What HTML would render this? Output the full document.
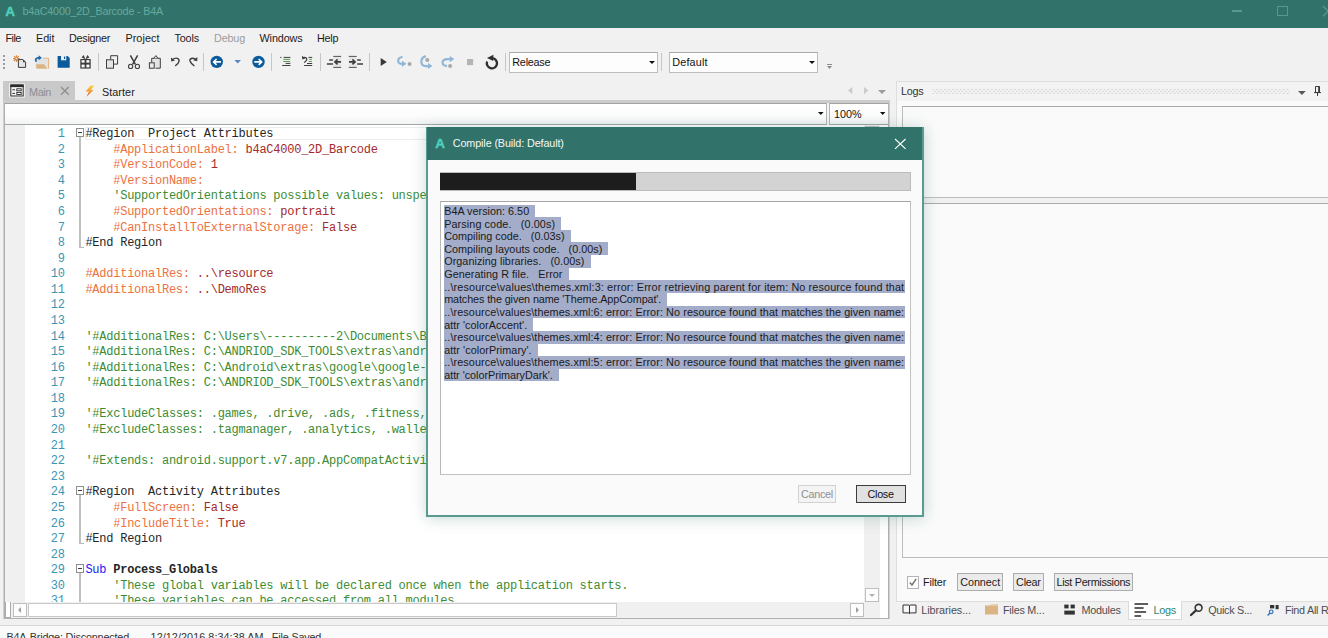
<!DOCTYPE html>
<html>
<head>
<meta charset="utf-8">
<title>b4aC4000_2D_Barcode - B4A</title>
<style>
*{box-sizing:border-box;margin:0;padding:0}
html,body{width:1328px;height:638px;overflow:hidden}
body{position:relative;background:#f1f1f1;font-family:"Liberation Sans",sans-serif;font-size:11px;color:#1b1b1b}
.abs{position:absolute}
.t{position:absolute;white-space:pre}
svg{overflow:visible}
.code{position:absolute;font-family:"Liberation Mono",monospace;font-size:12px;letter-spacing:-0.241px;line-height:16px;height:16px;white-space:pre}
.o{color:#ec7240}.r{color:#a52a2a}.g{color:#3c8c33}.k{color:#262626}.b{color:#2020f5}.n{color:#3a96b4}
.sel{background:#a3acc9}
</style>
</head>
<body>
<div class="abs" style="left:0px;top:0px;width:1328px;height:28px;background:#31736a;"></div>
<span class="t" style="left:5.30px;top:3.95px;font-size:13.5px;line-height:16.5px;height:16.5px;color:#4fd0bd;font-weight:700;-webkit-text-stroke:0.4px #4fd0bd;">A</span>
<span class="t" style="left:22.40px;top:4.85px;font-size:10.7px;line-height:13.7px;height:13.7px;color:#68a99e;letter-spacing:-0.152px;">b4aC4000_2D_Barcode - B4A</span>
<div class="abs" style="left:1232px;top:10.3px;width:10px;height:1.5px;background:#57998e;"></div>
<div class="abs" style="left:1277px;top:5.6px;width:10.5px;height:10px;border:1.3px solid #57998e;"></div>
<svg class="abs" style="left:1323px;top:5.5px" width="10.3" height="10.3" viewBox="0 0 10.3 10.3"><path d="M0 0L10.3 10.3M0 10.3L10.3 0" stroke="#57998e" stroke-width="1.3" fill="none"/></svg>
<span class="t" style="left:5.50px;top:32.10px;font-size:10.8px;line-height:13.8px;height:13.8px;color:#1b1b1b;letter-spacing:-0.527px;">File</span>
<span class="t" style="left:36.00px;top:32.10px;font-size:10.8px;line-height:13.8px;height:13.8px;color:#1b1b1b;letter-spacing:-0.052px;">Edit</span>
<span class="t" style="left:69.00px;top:32.10px;font-size:10.8px;line-height:13.8px;height:13.8px;color:#1b1b1b;letter-spacing:-0.252px;">Designer</span>
<span class="t" style="left:125.40px;top:32.10px;font-size:10.8px;line-height:13.8px;height:13.8px;color:#1b1b1b;letter-spacing:0.084px;">Project</span>
<span class="t" style="left:174.50px;top:32.10px;font-size:10.8px;line-height:13.8px;height:13.8px;color:#1b1b1b;letter-spacing:-0.144px;">Tools</span>
<span class="t" style="left:214.00px;top:32.10px;font-size:10.8px;line-height:13.8px;height:13.8px;color:#9d9d9d;letter-spacing:-0.166px;">Debug</span>
<span class="t" style="left:259.50px;top:32.10px;font-size:10.8px;line-height:13.8px;height:13.8px;color:#1b1b1b;letter-spacing:-0.102px;">Windows</span>
<span class="t" style="left:317.00px;top:32.10px;font-size:10.8px;line-height:13.8px;height:13.8px;color:#1b1b1b;letter-spacing:-0.255px;">Help</span>
<div class="abs" style="left:3px;top:55px;width:2px;height:2px;background:#9c9c9c;"></div>
<div class="abs" style="left:3px;top:59px;width:2px;height:2px;background:#9c9c9c;"></div>
<div class="abs" style="left:3px;top:63px;width:2px;height:2px;background:#9c9c9c;"></div>
<div class="abs" style="left:3px;top:67px;width:2px;height:2px;background:#9c9c9c;"></div>
<div class="abs" style="left:98.2px;top:53px;width:1px;height:18px;background:#c6c6c6;"></div>
<div class="abs" style="left:202.9px;top:53px;width:1px;height:18px;background:#c6c6c6;"></div>
<div class="abs" style="left:271.3px;top:53px;width:1px;height:18px;background:#c6c6c6;"></div>
<div class="abs" style="left:319.9px;top:53px;width:1px;height:18px;background:#c6c6c6;"></div>
<div class="abs" style="left:369.1px;top:53px;width:1px;height:18px;background:#c6c6c6;"></div>
<div class="abs" style="left:504.8px;top:53px;width:1px;height:18px;background:#c6c6c6;"></div>
<div class="abs" style="left:661.2px;top:53px;width:1px;height:18px;background:#c6c6c6;"></div>
<div class="abs" style="left:509.3px;top:51.5px;width:148.7px;height:21.2px;background:#fdfdfd;border:1px solid #bdbdbd;border-top-color:#a9a9a9;"></div>
<span class="t" style="left:512.30px;top:55.80px;font-size:10.8px;line-height:13.8px;height:13.8px;color:#111;letter-spacing:-0.232px;">Release</span>
<svg class="abs" style="left:649px;top:60.5px" width="6" height="3" viewBox="0 0 6 3"><path d="M0 0H6L3 3z" fill="#111"/></svg>
<div class="abs" style="left:669.3px;top:51.5px;width:148.7px;height:21.2px;background:#fdfdfd;border:1px solid #bdbdbd;border-top-color:#a9a9a9;"></div>
<span class="t" style="left:672.30px;top:55.80px;font-size:10.8px;line-height:13.8px;height:13.8px;color:#111;letter-spacing:0.169px;">Default</span>
<svg class="abs" style="left:809px;top:60.5px" width="6" height="3" viewBox="0 0 6 3"><path d="M0 0H6L3 3z" fill="#111"/></svg>
<div class="abs" style="left:827px;top:64px;width:5px;height:1px;background:#8c8c8c;"></div>
<svg class="abs" style="left:827px;top:66.2px" width="5" height="3" viewBox="0 0 5 3"><path d="M0 0H5L2.5 3z" fill="#8c8c8c"/></svg>
<svg class="abs" style="left:0;top:0" width="520" height="80" viewBox="0 0 520 80"><g stroke="#d4883c" stroke-width="1.1" fill="none"><path d="M16.4 55.2V62M13 58.6H19.8M14 56.2L18.8 61M18.8 56.2L14 61"/></g><circle cx="16.4" cy="58.6" r="1.1" fill="#f1f1f1" stroke="#d4883c" stroke-width="0.8"/><path d="M18.4 59.6H23L25.6 62.2V67.4H18.4z" fill="#e6e6e6" stroke="#3e3e3e" stroke-width="1"/><path d="M23 59.6V62.2H25.6z" fill="#3e3e3e"/><rect x="35.5" y="58" width="13" height="10.4" fill="#e3e3e3"/><path d="M43.3 58.2H48.6V68.6" fill="none" stroke="#dcb483" stroke-width="1"/><path d="M36 64.2H44L47.4 68.7H36.6z" fill="#dcb483"/><path d="M36.4 61.6C34.6 59.6 36 57.6 39.6 57.6" fill="none" stroke="#1766ab" stroke-width="1.7"/><path d="M38.6 55.2L41.9 57.7L38.6 60.2z" fill="#1766ab"/><path d="M57.6 55.9H67.6L69.7 58V67.7H57.6z" fill="#0b5a9c"/><rect x="61" y="55.9" width="5.3" height="4.4" fill="#ececec"/><rect x="64" y="56.6" width="1.2" height="2.4" fill="#0b5a9c"/><rect x="80.3" y="59" width="10.4" height="9.6" fill="#3e3e3e"/><rect x="81.6" y="60.2" width="3" height="2.4" fill="#fff"/><rect x="86.4" y="60.2" width="3" height="2.4" fill="#fff"/><rect x="81.6" y="64.6" width="3" height="2.8" fill="#fff"/><rect x="86.4" y="64.6" width="3" height="2.8" fill="#fff"/><path d="M85.5 59.2L81.6 57.6L83.6 54.9zM85.5 59.2L89.4 57.6L87.4 54.9z" fill="#3e3e3e"/><path d="M110.7 59.3V55.7H117.6V64.1H114" fill="none" stroke="#3e3e3e" stroke-width="1"/><rect x="106.5" y="59.8" width="7" height="8.4" fill="#e4e4e4" stroke="#3e3e3e" stroke-width="1"/><g fill="none" stroke="#3e3e3e"><path d="M130.4 55.3L135.4 64.4M137.6 55.3L132.6 64.4" stroke-width="1.5"/><circle cx="130.6" cy="66.4" r="2.1" stroke-width="1.1"/><circle cx="137.4" cy="66.4" r="2.1" stroke-width="1.1"/></g><path d="M151.7 62V58.3H160.3V68.2H155.5" fill="#e4e4e4" stroke="#3e3e3e" stroke-width="1"/><path d="M153.8 58.3L155.9 55.6L158 58.3" fill="#e4e4e4" stroke="#3e3e3e" stroke-width="1"/><rect x="149.4" y="62.8" width="4.8" height="5.4" fill="#ececec" stroke="#3e3e3e" stroke-width="1"/><path d="M172.6 59.6C176 56.8 179.6 58.4 179 61.4C178.6 63.4 177 64.8 175.2 65.8" fill="none" stroke="#3e3e3e" stroke-width="1.4"/><path d="M171 57.4L171.2 61.4L175 60.6z" fill="#3e3e3e"/><path d="M195.4 59.4C192.6 57.2 189.4 58.6 190 61C190.6 63 192.6 64.6 194.4 66" fill="none" stroke="#3e3e3e" stroke-width="1.4"/><path d="M197.4 57L197.2 61.2L193.2 60.2z" fill="#3e3e3e"/><circle cx="216.75" cy="61.9" r="6.2" fill="#0b5a9c"/><path d="M221 61.9H214.4M216.6 59L213.6 61.9L216.6 64.8" fill="none" stroke="#fff" stroke-width="1.6"/><path d="M234.4 60H241L237.7 63.4z" fill="#5a86c0"/><circle cx="258.5" cy="61.9" r="6.2" fill="#0b5a9c"/><path d="M254.3 61.9H260.8M258.7 59L261.7 61.9L258.7 64.8" fill="none" stroke="#fff" stroke-width="1.6"/><g stroke-width="1"><path d="M280.2 57.4H281.4M283.6 57.4H290.4M285.6 63.4H290.4M282.2 65.5H290.4" stroke="#3e3e3e"/><path d="M283.3 59.4H290.1M283.3 61.5H290.1" stroke="#5b9a4c"/></g><g stroke-width="1" fill="none"><path d="M308.5 57.4H312.2M307 63.5H312.2M304.1 65.5H312.2" stroke="#3e3e3e"/><path d="M309.2 59.4H311.9M308.8 61.5H311.9" stroke="#5b9a4c"/><path d="M303 57.6C306 56.6 307.6 58.6 306.4 60.4L304.2 62.6" stroke="#3e3e3e" stroke-width="1.2"/><path d="M302 55.8L302.2 59.4L305.2 58.4z" fill="#3e3e3e" stroke="none"/></g><rect x="333.3" y="56.9" width="8" height="10" fill="#e6e6e6"/><g stroke="#3e3e3e" fill="none"><path d="M333.3 56.4H341.2M333.3 67.4H341.2" stroke-width="0.9"/><path d="M329.2 60H332.9M326.9 64H332.9" stroke-width="1.7"/><path d="M341 61.9H335.4M337.6 59.4L334.9 61.9L337.6 64.4" stroke-width="1.6"/></g><rect x="348.8" y="56.9" width="8" height="10" fill="#e6e6e6"/><g stroke="#3e3e3e" fill="none"><path d="M348.8 56.4H356.7M348.8 67.4H356.7" stroke-width="0.9"/><path d="M357.2 60H360.8M357.2 64H363" stroke-width="1.7"/><path d="M349 61.9H354.6M352.4 59.4L355.1 61.9L352.4 64.4" stroke-width="1.6"/></g><path d="M380.7 58.1V66L386.8 62z" fill="#383838"/><path d="M402.6 57C396.8 57.6 396.4 64.4 402.8 63.9" fill="none" stroke="#92b7d6" stroke-width="2.2"/><path d="M402 60.7L406.5 63.8L402 67z" fill="#92b7d6"/><circle cx="409.6" cy="63.9" r="2" fill="#a8a8a8"/><path d="M425.8 56.1C419.8 58 419.8 65.8 426 66.1H428.6" fill="none" stroke="#92b7d6" stroke-width="2.2"/><path d="M428 63.1L432.5 66.1L428 69.1z" fill="#92b7d6"/><circle cx="427.3" cy="60" r="2" fill="#a8a8a8"/><path d="M447 66.2C440.8 65.4 441.2 59.3 447.4 59.1H450.2" fill="none" stroke="#92b7d6" stroke-width="2.2"/><path d="M449.8 56L454.3 59.1L449.8 62.2z" fill="#92b7d6"/><circle cx="450.1" cy="66" r="2" fill="#a8a8a8"/><rect x="467" y="59" width="6.1" height="6.1" fill="#b4b4b4"/><path d="M492.4 58.2A5.1 5.1 0 1 1 487.1 61.5" fill="none" stroke="#303030" stroke-width="2.3"/><path d="M487 58.1L493.4 54.7L493.2 61z" fill="#303030"/></svg>
<div class="abs" style="left:3px;top:81px;width:72px;height:19.5px;background:#c9c9c9;"></div>
<svg class="abs" style="left:0;top:0" width="140" height="104" viewBox="0 0 140 104"><rect x="9.3" y="83.6" width="15.4" height="13.8" fill="#fff"/><rect x="10.8" y="85" width="12.4" height="11" fill="#f4f4f4" stroke="#2b2b2b" stroke-width="1"/><rect x="10.3" y="84.5" width="13.4" height="2.6" fill="#2b2b2b"/><path d="M12.4 89.8H15M12.4 93.4H15" stroke="#2b2b2b" stroke-width="1"/><rect x="16.8" y="88.8" width="4.4" height="2" fill="#fff" stroke="#2b2b2b" stroke-width="0.9"/><rect x="16.8" y="92.4" width="4.4" height="2" fill="#fff" stroke="#2b2b2b" stroke-width="0.9"/><defs><linearGradient id="lg" x1="0" y1="0" x2="0" y2="1"><stop offset="0" stop-color="#f8d44a"/><stop offset="0.55" stop-color="#f29a3c"/><stop offset="1" stop-color="#e2504a"/></linearGradient></defs><path d="M90.4 85.6L94.2 85.6L91 90L93.6 90L86.6 96.8L88.8 91.6L85.6 91.6z" fill="url(#lg)"/></svg>
<span class="t" style="left:29.00px;top:85.60px;font-size:10.8px;line-height:13.8px;height:13.8px;color:#8b8e94;letter-spacing:-0.352px;">Main</span>
<svg class="abs" style="left:60.6px;top:87px" width="7.8" height="7.8" viewBox="0 0 7.8 7.8"><path d="M0 0L7.8 7.8M0 7.8L7.8 0" stroke="#909090" stroke-width="1.4" fill="none"/></svg>
<span class="t" style="left:101.90px;top:85.60px;font-size:10.8px;line-height:13.8px;height:13.8px;color:#1b1b1b;letter-spacing:0.085px;">Starter</span>
<svg class="abs" style="left:848px;top:86.8px" width="4.3" height="7.2" viewBox="0 0 4.3 7.2"><path d="M4.3 0V7.2L0 3.6z" fill="#cbcbcb"/></svg>
<svg class="abs" style="left:864px;top:86.8px" width="4.3" height="7.2" viewBox="0 0 4.3 7.2"><path d="M0 0V7.2L4.3 3.6z" fill="#cbcbcb"/></svg>
<svg class="abs" style="left:878px;top:90px" width="8" height="4" viewBox="0 0 8 4"><path d="M0 0H8L4 4z" fill="#9c9c9c"/></svg>
<div class="abs" style="left:3px;top:100.4px;width:886.8px;height:518.8px;background:#cfcfcf;"></div>
<div class="abs" style="left:3px;top:100.4px;width:886.8px;height:3px;background:#cbcbcb;"></div>
<div class="abs" style="left:4.1px;top:103px;width:884.9px;height:515.6px;background:#b0b0b0;"></div>
<div class="abs" style="left:5px;top:103px;width:883px;height:514.2px;background:#f4f4f4;"></div>
<div class="abs" style="left:5px;top:102.9px;width:821.6px;height:22px;background:linear-gradient(#fff,#fcfcfc 60%,#f2f3f3);border:1px solid #b4b4b4;border-left:none;border-top-color:#a4a4a4;border-bottom:1.6px solid #a3a6a6;"></div>
<svg class="abs" style="left:817.6px;top:111.8px" width="5.6" height="3" viewBox="0 0 5.6 3"><path d="M0 0H5.6L2.8 3z" fill="#111"/></svg>
<div class="abs" style="left:829.3px;top:102.9px;width:59.6px;height:22px;background:linear-gradient(#fff,#fcfcfc 60%,#f2f3f3);border:1px solid #b4b4b4;border-top-color:#a4a4a4;border-bottom:1.6px solid #a3a6a6;"></div>
<span class="t" style="left:834.00px;top:108.00px;font-size:10.8px;line-height:13.8px;height:13.8px;color:#111;letter-spacing:-0.006px;">100%</span>
<svg class="abs" style="left:879.7px;top:111.8px" width="5.4" height="3" viewBox="0 0 5.4 3"><path d="M0 0H5.4L2.7 3z" fill="#111"/></svg>
<div class="abs" style="left:5px;top:125px;width:883px;height:477px;background:#fff;overflow:hidden"><div class="abs" style="left:0px;top:0px;width:20px;height:479px;background:#f0f0f0;"></div><div class="abs" style="left:80px;top:2.2px;width:780px;height:12.6px;border:1px solid #ececec;border-right:none;"></div><span class="code n" style="left:18.6px;top:1.1px;width:41px;text-align:right">1</span><span class="code" style="left:80.4px;top:1.1px"><span class="k">#Region  Project Attributes</span></span><span class="code n" style="left:18.6px;top:16.68px;width:41px;text-align:right">2</span><span class="code" style="left:80.4px;top:16.68px"><span class="o">    #ApplicationLabel:</span><span class="r"> b4aC4000_2D_Barcode</span></span><span class="code n" style="left:18.6px;top:32.25px;width:41px;text-align:right">3</span><span class="code" style="left:80.4px;top:32.25px"><span class="o">    #VersionCode:</span><span class="r"> 1</span></span><span class="code n" style="left:18.6px;top:47.83px;width:41px;text-align:right">4</span><span class="code" style="left:80.4px;top:47.83px"><span class="o">    #VersionName:</span><span class="r"> </span></span><span class="code n" style="left:18.6px;top:63.4px;width:41px;text-align:right">5</span><span class="code" style="left:80.4px;top:63.4px"><span class="g">    'SupportedOrientations possible values: unspecified, landscape or portrait.</span></span><span class="code n" style="left:18.6px;top:78.98px;width:41px;text-align:right">6</span><span class="code" style="left:80.4px;top:78.98px"><span class="o">    #SupportedOrientations:</span><span class="r"> portrait</span></span><span class="code n" style="left:18.6px;top:94.56px;width:41px;text-align:right">7</span><span class="code" style="left:80.4px;top:94.56px"><span class="o">    #CanInstallToExternalStorage:</span><span class="r"> False</span></span><span class="code n" style="left:18.6px;top:110.13px;width:41px;text-align:right">8</span><span class="code" style="left:80.4px;top:110.13px"><span class="k">#End Region</span></span><span class="code n" style="left:18.6px;top:125.71px;width:41px;text-align:right">9</span><span class="code n" style="left:18.6px;top:141.28px;width:41px;text-align:right">10</span><span class="code" style="left:80.4px;top:141.28px"><span class="o">#AdditionalRes:</span><span class="r"> ..\resource</span></span><span class="code n" style="left:18.6px;top:156.86px;width:41px;text-align:right">11</span><span class="code" style="left:80.4px;top:156.86px"><span class="o">#AdditionalRes:</span><span class="r"> ..\DemoRes</span></span><span class="code n" style="left:18.6px;top:172.44px;width:41px;text-align:right">12</span><span class="code n" style="left:18.6px;top:188.01px;width:41px;text-align:right">13</span><span class="code n" style="left:18.6px;top:203.59px;width:41px;text-align:right">14</span><span class="code" style="left:80.4px;top:203.59px"><span class="g">'#AdditionalRes: C:\Users\----------2\Documents\B4A\resource</span></span><span class="code n" style="left:18.6px;top:219.16px;width:41px;text-align:right">15</span><span class="code" style="left:80.4px;top:219.16px"><span class="g">'#AdditionalRes: C:\ANDRIOD_SDK_TOOLS\extras\android\support\v7\appcompat\res</span></span><span class="code n" style="left:18.6px;top:234.74px;width:41px;text-align:right">16</span><span class="code" style="left:80.4px;top:234.74px"><span class="g">'#AdditionalRes: C:\Android\extras\google\google-play-services\libproject</span></span><span class="code n" style="left:18.6px;top:250.32px;width:41px;text-align:right">17</span><span class="code" style="left:80.4px;top:250.32px"><span class="g">'#AdditionalRes: C:\ANDRIOD_SDK_TOOLS\extras\android\support\design\res</span></span><span class="code n" style="left:18.6px;top:265.89px;width:41px;text-align:right">18</span><span class="code n" style="left:18.6px;top:281.47px;width:41px;text-align:right">19</span><span class="code" style="left:80.4px;top:281.47px"><span class="g">'#ExcludeClasses: .games, .drive, .ads, .fitness, .wearable, .measurement</span></span><span class="code n" style="left:18.6px;top:297.04px;width:41px;text-align:right">20</span><span class="code" style="left:80.4px;top:297.04px"><span class="g">'#ExcludeClasses: .tagmanager, .analytics, .wallet, .plus, .vision, .gcm</span></span><span class="code n" style="left:18.6px;top:312.62px;width:41px;text-align:right">21</span><span class="code n" style="left:18.6px;top:328.2px;width:41px;text-align:right">22</span><span class="code" style="left:80.4px;top:328.2px"><span class="g">'#Extends: android.support.v7.app.AppCompatActivity</span></span><span class="code n" style="left:18.6px;top:343.77px;width:41px;text-align:right">23</span><span class="code n" style="left:18.6px;top:359.35px;width:41px;text-align:right">24</span><span class="code" style="left:80.4px;top:359.35px"><span class="k">#Region  Activity Attributes</span></span><span class="code n" style="left:18.6px;top:374.92px;width:41px;text-align:right">25</span><span class="code" style="left:80.4px;top:374.92px"><span class="o">    #FullScreen:</span><span class="r"> False</span></span><span class="code n" style="left:18.6px;top:390.5px;width:41px;text-align:right">26</span><span class="code" style="left:80.4px;top:390.5px"><span class="o">    #IncludeTitle:</span><span class="r"> True</span></span><span class="code n" style="left:18.6px;top:406.08px;width:41px;text-align:right">27</span><span class="code" style="left:80.4px;top:406.08px"><span class="k">#End Region</span></span><span class="code n" style="left:18.6px;top:421.65px;width:41px;text-align:right">28</span><span class="code n" style="left:18.6px;top:437.23px;width:41px;text-align:right">29</span><span class="code" style="left:80.4px;top:437.23px"><span class="b">Sub</span><span class="k"> <b>Process_Globals</b></span></span><span class="code n" style="left:18.6px;top:452.8px;width:41px;text-align:right">30</span><span class="code" style="left:80.4px;top:452.8px"><span class="g">    'These global variables will be declared once when the application starts.</span></span><span class="code n" style="left:18.6px;top:468.38px;width:41px;text-align:right">31</span><span class="code" style="left:80.4px;top:468.38px"><span class="g">    'These variables can be accessed from all modules.</span></span><div class="abs" style="left:70.9px;top:3.2px;width:8.4px;height:8.4px;background:#fff;border:1px solid #8e8e8e;"></div><div class="abs" style="left:72.9px;top:6.9px;width:4.4px;height:1px;background:#3a3a3a;"></div><div class="abs" style="left:74.2px;top:11.6px;width:1.4px;height:111.032px;background:#c0c0c0;"></div><div class="abs" style="left:74.4px;top:122.2px;width:4.5px;height:1px;background:#b9b9b9;"></div><div class="abs" style="left:70.9px;top:361.4px;width:8.4px;height:8.4px;background:#fff;border:1px solid #8e8e8e;"></div><div class="abs" style="left:72.9px;top:365.1px;width:4.4px;height:1px;background:#3a3a3a;"></div><div class="abs" style="left:74.2px;top:369.8px;width:1.4px;height:48.728px;background:#c0c0c0;"></div><div class="abs" style="left:74.4px;top:418.2px;width:4.5px;height:1px;background:#b9b9b9;"></div><div class="abs" style="left:70.9px;top:439.3px;width:8.4px;height:8.4px;background:#fff;border:1px solid #8e8e8e;"></div><div class="abs" style="left:72.9px;top:443px;width:4.4px;height:1px;background:#3a3a3a;"></div><div class="abs" style="left:74.2px;top:447.7px;width:1.4px;height:72.304px;background:#c0c0c0;"></div><div class="abs" style="left:858.6px;top:0px;width:16.4px;height:479px;background:#f0f0f0;"></div><div class="abs" style="left:860.2px;top:463.4px;width:13.6px;height:13.8px;background:#fdfdfd;border:1px solid #bebebe;"></div><div class="abs" style="left:860.2px;top:0.6px;width:13.6px;height:13.8px;background:#fdfdfd;border:1px solid #bebebe;"></div><svg class="abs" style="left:864px;top:469.2px" width="6" height="3" viewBox="0 0 6 3"><path d="M0 0H6L3 3z" fill="#b0b0b0"/></svg></div>
<div class="abs" style="left:5px;top:602px;width:883px;height:16px;background:#f0f0f0;"></div>
<div class="abs" style="left:5px;top:602px;width:6.3px;height:16px;background:#fff;border:1px solid #ababab;border-top:none;"></div>
<div class="abs" style="left:12.8px;top:603px;width:14px;height:14px;background:#fdfdfd;border:1px solid #bebebe;"></div>
<svg class="abs" style="left:18px;top:607px" width="3" height="6" viewBox="0 0 3 6"><path d="M3 0V6L0 3z" fill="#9e9e9e"/></svg>
<div class="abs" style="left:28.4px;top:603px;width:589px;height:14px;background:#fff;border:1px solid #c9c9c9;"></div>
<div class="abs" style="left:850px;top:603.2px;width:14px;height:13.6px;background:#fdfdfd;border:1px solid #bebebe;"></div>
<svg class="abs" style="left:856px;top:607px" width="3" height="6" viewBox="0 0 3 6"><path d="M0 0V6L3 3z" fill="#9e9e9e"/></svg>
<div class="abs" style="left:863.5px;top:602px;width:24.5px;height:16px;background:#fff;"></div>
<div class="abs" style="left:863.5px;top:602px;width:16.5px;height:16px;background:#f0f0f0;"></div>
<div class="abs" style="left:896px;top:81px;width:436px;height:521px;background:#fafafa;border:1px solid #dedede;"></div>
<div class="abs" style="left:897px;top:82px;width:434px;height:19px;background:#f3f3f3;"></div>
<span class="t" style="left:901.00px;top:85.30px;font-size:10.8px;line-height:13.8px;height:13.8px;color:#333;letter-spacing:-0.280px;">Logs</span>
<svg class="abs" style="left:932px;top:89.3px" width="358" height="5.2" viewBox="0 0 358 5.2"><defs><pattern id="dots" width="3.9" height="3.9" patternUnits="userSpaceOnUse"><rect x="0.3" y="0" width="1.2" height="1.1" fill="#c6c6c6"/><rect x="2.25" y="1.95" width="1.2" height="1.1" fill="#c6c6c6"/></pattern></defs><rect width="358" height="5.1" fill="url(#dots)"/></svg>
<svg class="abs" style="left:1298.4px;top:91.4px" width="7.8" height="4" viewBox="0 0 7.8 4"><path d="M0 0H7.8L3.9 4z" fill="#585858"/></svg>
<svg class="abs" style="left:1314px;top:86px" width="7" height="10" viewBox="0 0 7 10"><path d="M1.5 0.5H5.5V6.5H1.5zM0 6.6H7M3.5 6.6V10M4.7 0.5V6.5" stroke="#3a3a3a" stroke-width="1" fill="none"/></svg>
<div class="abs" style="left:902px;top:198px;width:432px;height:5px;background:#f0f0f0;"></div>
<div class="abs" style="left:902px;top:106px;width:432px;height:92.3px;background:#fafafa;border:1px solid #bcbcbc;border-top-color:#aaa;"></div>
<div class="abs" style="left:902px;top:203px;width:432px;height:355px;background:#fafafa;border:1px solid #bcbcbc;border-top-color:#aaa;"></div>
<div class="abs" style="left:906.7px;top:576.3px;width:12.8px;height:12.3px;background:#fdfdfd;border:1px solid #b3b3b3;"></div>
<svg class="abs" style="left:909.2px;top:578.4px" width="8" height="8" viewBox="0 0 8 8"><path d="M0.8 4.6L3 7L7.2 0.8" stroke="#777" stroke-width="1.5" fill="none"/></svg>
<span class="t" style="left:923.00px;top:576.40px;font-size:10.8px;line-height:13.8px;height:13.8px;color:#1b1b1b;letter-spacing:-0.133px;">Filter</span>
<div class="abs" style="left:957.3px;top:573.2px;width:45.7px;height:17.8px;background:#ebebeb;border:1px solid #adadad;"></div>
<span class="t" style="left:960.15px;top:576.30px;font-size:10.8px;line-height:13.8px;height:13.8px;color:#1b1b1b;letter-spacing:-0.031px;">Connect</span>
<div class="abs" style="left:1013px;top:573.2px;width:30.7px;height:17.8px;background:#ebebeb;border:1px solid #adadad;"></div>
<span class="t" style="left:1016.10px;top:576.30px;font-size:10.8px;line-height:13.8px;height:13.8px;color:#1b1b1b;letter-spacing:-0.263px;">Clear</span>
<div class="abs" style="left:1053.7px;top:573.2px;width:79.3px;height:17.8px;background:#ebebeb;border:1px solid #adadad;"></div>
<span class="t" style="left:1056.45px;top:576.30px;font-size:10.8px;line-height:13.8px;height:13.8px;color:#1b1b1b;letter-spacing:-0.301px;">List Permissions</span>
<div class="abs" style="left:1128px;top:600.5px;width:53.5px;height:19.5px;background:#fff;border:1px solid #dadada;border-top:none;"></div>
<span class="t" style="left:921.30px;top:604.30px;font-size:10.8px;line-height:13.8px;height:13.8px;color:#4d4d52;letter-spacing:-0.059px;">Libraries...</span>
<span class="t" style="left:1003.00px;top:604.30px;font-size:10.8px;line-height:13.8px;height:13.8px;color:#4d4d52;letter-spacing:-0.240px;">Files M...</span>
<span class="t" style="left:1081.50px;top:604.30px;font-size:10.8px;line-height:13.8px;height:13.8px;color:#4d4d52;letter-spacing:-0.230px;">Modules</span>
<span class="t" style="left:1153.50px;top:604.30px;font-size:10.8px;line-height:13.8px;height:13.8px;color:#2b8576;letter-spacing:-0.280px;">Logs</span>
<span class="t" style="left:1208.20px;top:604.30px;font-size:10.8px;line-height:13.8px;height:13.8px;color:#4d4d52;letter-spacing:-0.301px;">Quick S...</span>
<span class="t" style="left:1284.90px;top:604.30px;font-size:10.8px;line-height:13.8px;height:13.8px;color:#4d4d52;letter-spacing:-0.260px;">Find All R</span>
<svg class="abs" style="left:0;top:0" width="1328" height="638" viewBox="0 0 1328 638"><path d="M903 605H908.4C909.2 605 909.5 605.4 909.5 606V613.6C909.5 613.2 909 612.9 908.4 612.9H903zM916 605H910.6C909.8 605 909.5 605.4 909.5 606V613.6C909.5 613.2 910 612.9 910.6 612.9H916z" fill="#f7f7f7" stroke="#333" stroke-width="1"/><path d="M985 605.6H989.6L990.8 604.4H998V614.6H985z" fill="#dcb483"/><path d="M990.6 605.6H997.4" stroke="#ecd2b0" stroke-width="0.8"/><rect x="1064.3" y="604.6" width="4.3" height="3.8" fill="#333"/><rect x="1070.6" y="604.6" width="4.2" height="3.8" fill="#333"/><rect x="1064.3" y="610.6" width="10.5" height="4" fill="#333"/><path d="M1134.5 604H1148.1M1134.5 607.9H1143.6M1134.5 612H1146.1M1134.5 615.9H1141.1" stroke="#2b2b2b" stroke-width="1.5"/><circle cx="1198.6" cy="607.8" r="3.4" fill="none" stroke="#333" stroke-width="1.6"/><path d="M1196 610.4L1191 615" stroke="#333" stroke-width="2.2" stroke-linecap="round"/><rect x="1270" y="605" width="4.2" height="3.4" fill="#333"/><rect x="1275.6" y="605" width="3" height="4.2" fill="#333"/><circle cx="1271.2" cy="611.8" r="1.8" fill="none" stroke="#2f6fb5" stroke-width="1.2"/><path d="M1269.8 613.2L1267.6 615.4" stroke="#2f6fb5" stroke-width="1.4"/></svg>
<div class="abs" style="left:0px;top:625px;width:1328px;height:1px;background:#d9d9d9;"></div>
<div class="abs" style="left:0px;top:626px;width:1328px;height:12px;background:#fafafa;"></div>
<span class="t" style="left:6.40px;top:631.10px;font-size:10.8px;line-height:13.8px;height:13.8px;color:#333;letter-spacing:-0.168px;">B4A-Bridge: Disconnected</span>
<span class="t" style="left:150.60px;top:631.10px;font-size:10.8px;line-height:13.8px;height:13.8px;color:#333;letter-spacing:0.063px;">12/12/2016 8:34:38 AM</span>
<span class="t" style="left:271.80px;top:631.10px;font-size:10.8px;line-height:13.8px;height:13.8px;color:#333;letter-spacing:-0.162px;">File Saved</span>
<div class="abs" style="left:426px;top:126.5px;width:497.7px;height:390.1px;background:#fafafa;border:2px solid #5a9b90;box-shadow:0 1px 14px 0 rgba(49,115,106,.27);"></div>
<div class="abs" style="left:426.9px;top:127.3px;width:495px;height:32.6px;background:#31736a;"></div>
<span class="t" style="left:435.30px;top:135.75px;font-size:13.5px;line-height:16.5px;height:16.5px;color:#4fd0bd;font-weight:700;-webkit-text-stroke:0.4px #4fd0bd;">A</span>
<span class="t" style="left:452.80px;top:137.00px;font-size:10.8px;line-height:13.8px;height:13.8px;color:#f4f8f7;letter-spacing:-0.126px;">Compile (Build: Default)</span>
<svg class="abs" style="left:894.7px;top:138.5px" width="10.6" height="9.8" viewBox="0 0 10.6 9.8"><path d="M0 0L10.6 9.8M0 9.8L10.6 0" stroke="#fff" stroke-width="1.1" fill="none"/></svg>
<div class="abs" style="left:439.7px;top:172.4px;width:471px;height:18.6px;background:#d3d3d3;border:1px solid #bcbcbc;"></div>
<div class="abs" style="left:440.2px;top:172.9px;width:196px;height:17.6px;background:#1d1d1d;"></div>
<div class="abs" style="left:439.7px;top:201px;width:471px;height:274.3px;background:#fff;border:1px solid #c2c2c2;border-top-color:#a6a6a6;border-left-color:#b8b8b8;"></div>
<div class="abs" style="left:444.2px;top:204.6px;width:91.3px;height:12.82px;background:#a3acc9;"></div>
<span class="t" style="left:444.20px;top:205.01px;font-size:10.8px;line-height:13.8px;height:13.8px;color:#1a1a1a;letter-spacing:0.021px;">B4A version: 6.50</span>
<div class="abs" style="left:444.2px;top:217.22px;width:117.1px;height:12.82px;background:#a3acc9;"></div>
<span class="t" style="left:444.20px;top:217.63px;font-size:10.8px;line-height:13.8px;height:13.8px;color:#1a1a1a;letter-spacing:0.103px;">Parsing code.   (0.00s)</span>
<div class="abs" style="left:444.2px;top:229.84px;width:126.5px;height:12.82px;background:#a3acc9;"></div>
<span class="t" style="left:444.20px;top:230.25px;font-size:10.8px;line-height:13.8px;height:13.8px;color:#1a1a1a;letter-spacing:0.015px;">Compiling code.   (0.03s)</span>
<div class="abs" style="left:444.2px;top:242.46px;width:164.2px;height:12.82px;background:#a3acc9;"></div>
<span class="t" style="left:444.20px;top:242.87px;font-size:10.8px;line-height:13.8px;height:13.8px;color:#1a1a1a;letter-spacing:0.029px;">Compiling layouts code.   (0.00s)</span>
<div class="abs" style="left:444.2px;top:255.08px;width:146.5px;height:12.82px;background:#a3acc9;"></div>
<span class="t" style="left:444.20px;top:255.49px;font-size:10.8px;line-height:13.8px;height:13.8px;color:#1a1a1a;letter-spacing:0.051px;">Organizing libraries.   (0.00s)</span>
<div class="abs" style="left:444.2px;top:267.7px;width:124.8px;height:12.82px;background:#a3acc9;"></div>
<span class="t" style="left:444.20px;top:268.11px;font-size:10.8px;line-height:13.8px;height:13.8px;color:#1a1a1a;letter-spacing:0.049px;">Generating R file.   Error</span>
<div class="abs" style="left:444.2px;top:280.32px;width:460.5px;height:12.82px;background:#a3acc9;"></div>
<span class="t" style="left:444.20px;top:280.73px;font-size:10.8px;line-height:13.8px;height:13.8px;color:#1a1a1a;letter-spacing:0.135px;">..\resource\values\themes.xml:3: error: Error retrieving parent for item: No resource found that</span>
<div class="abs" style="left:444.2px;top:292.94px;width:223.3px;height:12.82px;background:#a3acc9;"></div>
<span class="t" style="left:444.20px;top:293.35px;font-size:10.8px;line-height:13.8px;height:13.8px;color:#1a1a1a;letter-spacing:-0.107px;">matches the given name 'Theme.AppCompat'.</span>
<div class="abs" style="left:444.2px;top:305.56px;width:460.5px;height:12.82px;background:#a3acc9;"></div>
<span class="t" style="left:444.20px;top:305.97px;font-size:10.8px;line-height:13.8px;height:13.8px;color:#1a1a1a;letter-spacing:0.100px;">..\resource\values\themes.xml:6: error: Error: No resource found that matches the given name:</span>
<div class="abs" style="left:444.2px;top:318.18px;width:89.3px;height:12.82px;background:#a3acc9;"></div>
<span class="t" style="left:444.20px;top:318.59px;font-size:10.8px;line-height:13.8px;height:13.8px;color:#1a1a1a;letter-spacing:0.045px;">attr 'colorAccent'.</span>
<div class="abs" style="left:444.2px;top:330.8px;width:460.5px;height:12.82px;background:#a3acc9;"></div>
<span class="t" style="left:444.20px;top:331.21px;font-size:10.8px;line-height:13.8px;height:13.8px;color:#1a1a1a;letter-spacing:0.100px;">..\resource\values\themes.xml:4: error: Error: No resource found that matches the given name:</span>
<div class="abs" style="left:444.2px;top:343.42px;width:93.8px;height:12.82px;background:#a3acc9;"></div>
<span class="t" style="left:444.20px;top:343.83px;font-size:10.8px;line-height:13.8px;height:13.8px;color:#1a1a1a;letter-spacing:0.059px;">attr 'colorPrimary'.</span>
<div class="abs" style="left:444.2px;top:356.04px;width:460.5px;height:12.82px;background:#a3acc9;"></div>
<span class="t" style="left:444.20px;top:356.45px;font-size:10.8px;line-height:13.8px;height:13.8px;color:#1a1a1a;letter-spacing:0.100px;">..\resource\values\themes.xml:5: error: Error: No resource found that matches the given name:</span>
<div class="abs" style="left:444.2px;top:368.66px;width:114.8px;height:12.82px;background:#a3acc9;"></div>
<span class="t" style="left:444.20px;top:369.07px;font-size:10.8px;line-height:13.8px;height:13.8px;color:#1a1a1a;letter-spacing:-0.025px;">attr 'colorPrimaryDark'.</span>
<div class="abs" style="left:798px;top:485.3px;width:38px;height:18px;background:#f4f4f4;border:1px solid #d2d2d2;"></div>
<span class="t" style="left:801.00px;top:488.30px;font-size:10.8px;line-height:13.8px;height:13.8px;color:#8f8f8f;letter-spacing:-0.302px;">Cancel</span>
<div class="abs" style="left:856.3px;top:485.2px;width:49.3px;height:18.2px;background:#e1e1e1;border:1px solid #3c3c3c;"></div>
<span class="t" style="left:867.60px;top:488.30px;font-size:10.8px;line-height:13.8px;height:13.8px;color:#111;letter-spacing:-0.322px;">Close</span>
</body>
</html>
